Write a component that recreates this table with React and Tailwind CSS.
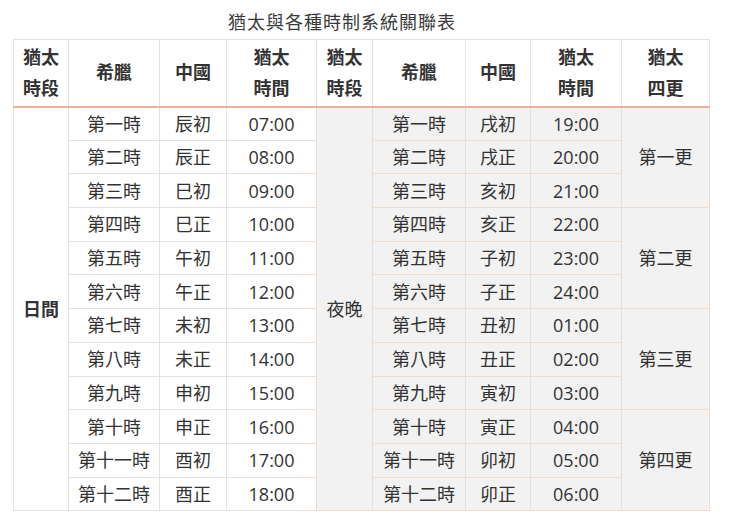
import React from 'react';

const day = [
  ['第一時', '辰初', '07:00'],
  ['第二時', '辰正', '08:00'],
  ['第三時', '巳初', '09:00'],
  ['第四時', '巳正', '10:00'],
  ['第五時', '午初', '11:00'],
  ['第六時', '午正', '12:00'],
  ['第七時', '未初', '13:00'],
  ['第八時', '未正', '14:00'],
  ['第九時', '申初', '15:00'],
  ['第十時', '申正', '16:00'],
  ['第十一時', '酉初', '17:00'],
  ['第十二時', '酉正', '18:00'],
];

const night = [
  ['第一時', '戌初', '19:00'],
  ['第二時', '戌正', '20:00'],
  ['第三時', '亥初', '21:00'],
  ['第四時', '亥正', '22:00'],
  ['第五時', '子初', '23:00'],
  ['第六時', '子正', '24:00'],
  ['第七時', '丑初', '01:00'],
  ['第八時', '丑正', '02:00'],
  ['第九時', '寅初', '03:00'],
  ['第十時', '寅正', '04:00'],
  ['第十一時', '卯初', '05:00'],
  ['第十二時', '卯正', '06:00'],
];

const watches = ['第一更', '第二更', '第三更', '第四更'];

const App = () => {
  const w = 'border border-[#e6e1da] bg-white';
  const g = 'border border-[#efdccf] bg-[#f2f2f2]';
  const h = `${w} border-b-2 border-b-[#e9b29c] font-bold`;

  return (
    <div
      className="w-[740px] h-[522px] bg-white text-[#333]"
      style={{ fontFamily: '"Open Sans", "Noto Sans CJK TC", sans-serif' }}
    >
      <div className="h-[39px] pt-[9px] pr-[56px] text-center text-[18px] leading-[26px] tracking-[1px] text-[#3a3a3a]">
        猶太與各種時制系統關聯表
      </div>
      <div className="pl-[13px]">
        <table className="border-collapse text-center text-[18px]">
          <colgroup>
            <col className="w-[55px]" />
            <col className="w-[91px]" />
            <col className="w-[67px]" />
            <col className="w-[90px]" />
            <col className="w-[56px]" />
            <col className="w-[93px]" />
            <col className="w-[65px]" />
            <col className="w-[91px]" />
            <col className="w-[88px]" />
          </colgroup>
          <thead>
            <tr className="h-[67px] text-[18px] leading-[31px]">
              <th className={h}>猶太<br />時段</th>
              <th className={h}>希臘</th>
              <th className={h}>中國</th>
              <th className={h}>猶太<br />時間</th>
              <th className={h}>猶太<br />時段</th>
              <th className={h}>希臘</th>
              <th className={h}>中國</th>
              <th className={h}>猶太<br />時間</th>
              <th className={h}>猶太<br />四更</th>
            </tr>
          </thead>
          <tbody>
            {day.map((d, i) => (
              <tr key={i} className="h-[33.7px] leading-[24px]">
                {i === 0 && (
                  <td rowSpan={12} className={`${w} font-bold`}>日間</td>
                )}
                <td className={w}>{d[0]}</td>
                <td className={w}>{d[1]}</td>
                <td className={w}>{d[2]}</td>
                {i === 0 && (
                  <td rowSpan={12} className={g}>夜晚</td>
                )}
                <td className={g}>{night[i][0]}</td>
                <td className={g}>{night[i][1]}</td>
                <td className={g}>{night[i][2]}</td>
                {i % 3 === 0 && (
                  <td rowSpan={3} className={g}>{watches[i / 3]}</td>
                )}
              </tr>
            ))}
          </tbody>
        </table>
      </div>
    </div>
  );
};

export default App;
